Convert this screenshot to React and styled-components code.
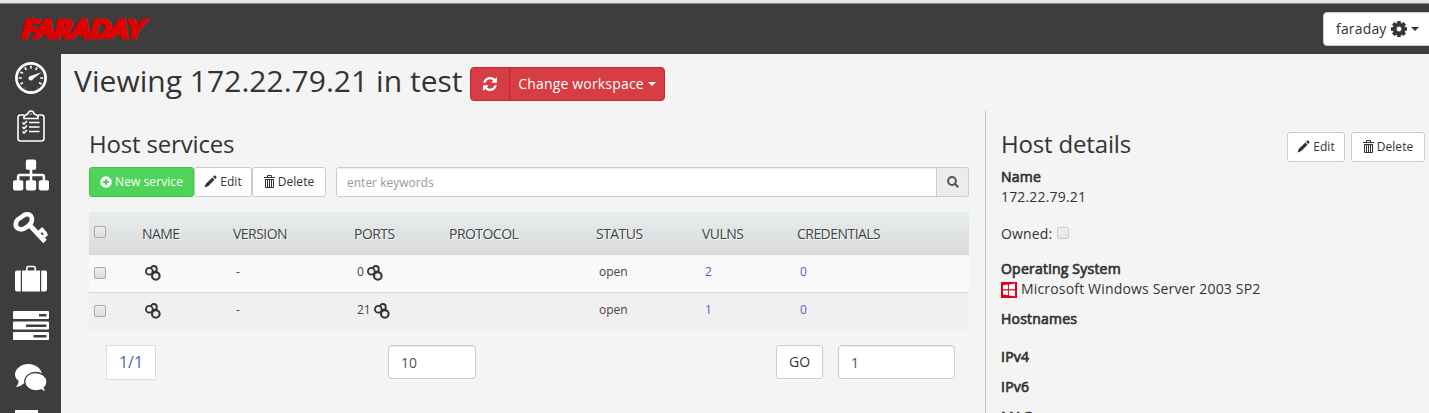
import React from "react";
import styled, { createGlobalStyle } from "styled-components";

const Global = createGlobalStyle`
  *, *::before, *::after { box-sizing: border-box; }
  html, body { margin: 0; padding: 0; }
  body {
    font-family: "Open Sans", "Liberation Sans", sans-serif;
    font-size: 14px;
    line-height: 20px;
    color: #333;
    background: #f4f4f4;
    overflow: hidden;
  }
  svg { display: block; flex: none; }
  button, input { font-family: inherit; margin: 0; }
`;

const Page = styled.div`
  height: 413px;
  overflow: hidden;
  display: flex;
  flex-direction: column;
  background: #3d3d3d;
`;
const TopStrip = styled.div`
  flex: none;
  height: 4px;
  background: #e5e5e1;
  border-bottom: 1px solid #8c8c8a;
`;
const Header = styled.header`
  flex: none;
  height: 50px;
  display: flex;
  justify-content: space-between;
  align-items: flex-start;
  padding: 8px 0 0 20px;
`;
const Logo = styled.svg`
  margin-top: 6px;
  overflow: visible;
`;
const UserButton = styled.button`
  display: flex;
  align-items: center;
  width: 112px;
  height: 34px;
  margin-right: -6px;
  padding: 0 0 1px 12px;
  border: 1px solid #ccc;
  border-radius: 4px;
  background: #fff;
  color: #333;
  font-size: 14px;
  letter-spacing: 0.17px;
  svg { margin-left: 4px; }
`;
const Caret = styled.span`
  margin-left: 4px;
  border-top: 4px solid currentColor;
  border-left: 4px solid transparent;
  border-right: 4px solid transparent;
`;
const Body = styled.div`
  flex: 1;
  min-height: 0;
  display: flex;
`;
const Sidebar = styled.nav`
  width: 61px;
  flex: none;
  display: flex;
  flex-direction: column;
  align-items: center;
  overflow: hidden;
`;
const NavItem = styled.a`
  flex: none;
  height: ${(p) => p.$h}px;
  width: 61px;
  display: flex;
  align-items: center;
  justify-content: center;
  color: #fff;
`;
const Main = styled.main`
  flex: 1;
  min-width: 0;
  background: #f4f4f4;
  display: flex;
  flex-direction: column;
  overflow: hidden;
`;
const TitleBar = styled.div`
  flex: none;
  height: 57px;
  display: flex;
  padding: 0 0 0 13px;
`;
const Title = styled.h2`
  margin: 0;
  width: 396px;
  font-size: 30px;
  font-weight: 400;
  line-height: 54px;
  letter-spacing: 0.03px;
  white-space: nowrap;
`;
const RedGroup = styled.div`
  display: flex;
  height: 34px;
  margin-top: 13px;
  border: 1px solid #c9252d;
  border-radius: 4px;
  background: #d63d45;
  overflow: hidden;
`;
const RedButton = styled.button`
  display: flex;
  align-items: center;
  justify-content: center;
  width: ${(p) => p.$w}px;
  padding: 0 0 1px;
  border: 0;
  border-left: ${(p) => (p.$divided ? "1px solid #c9252d" : "0")};
  background: transparent;
  color: #fff;
  font-size: 14px;
  letter-spacing: 0.18px;
  white-space: nowrap;
`;
const Columns = styled.div`
  flex: 1;
  min-height: 0;
  display: flex;
`;
const Services = styled.section`
  width: 924px;
  flex: none;
  padding: 20px 16px 0 28px;
`;
const Details = styled.section`
  flex: 1;
  border-left: 1px solid #c3c3c3;
  padding: 20px 4px 0 15px;
`;
const Heading = styled.h3`
  margin: 0;
  font-size: 24px;
  font-weight: 400;
  line-height: 26px;
  letter-spacing: -0.17px;
  white-space: nowrap;
`;
const Toolbar = styled.div`
  display: flex;
  margin-top: 10px;
  height: 30px;
`;
const Button = styled.button`
  display: flex;
  align-items: center;
  justify-content: center;
  gap: 3px;
  width: ${(p) => p.$w}px;
  height: ${(p) => p.$h || 30}px;
  padding: 0 0 1px;
  border: 1px solid ${(p) => (p.$green ? "#3fc548" : "#ccc")};
  border-radius: 3px;
  background: ${(p) => (p.$green ? "#4fd358" : "#fff")};
  color: ${(p) => (p.$green ? "#fff" : "#333")};
  font-size: ${(p) => p.$size || 12}px;
  letter-spacing: 0.08px;
  white-space: nowrap;
`;
const Search = styled.div`
  flex: 1;
  display: flex;
  margin-left: 10px;
  border: 1px solid #ccc;
  border-radius: 3px;
  overflow: hidden;
`;
const SearchInput = styled.input`
  flex: 1;
  min-width: 0;
  border: 0;
  padding: 1px 10px;
  background: #fff;
  box-shadow: inset 0 1px 1px rgba(0, 0, 0, 0.075);
  font-size: 12px;
  color: #555;
  &::placeholder { color: #999; opacity: 1; }
`;
const SearchButton = styled.span`
  width: 32px;
  display: flex;
  align-items: center;
  justify-content: center;
  border-left: 1px solid #ccc;
  background: #ececec;
  color: #555;
`;
const Table = styled.div`
  margin-top: 15px;
`;
const Row = styled.div`
  display: grid;
  grid-template-columns: 53px 91px 121px 95px 147px 106px 95px 1fr;
`;
const HeadRow = styled(Row)`
  height: 43px;
  background: linear-gradient(#e6eded, #dadada);
  line-height: 43px;
  letter-spacing: -0.54px;
  text-shadow: 1px 1px 0 rgba(255, 255, 255, 0.8);
  color: #444;
`;
const DataRow = styled(Row)`
  height: ${(p) => (p.$alt ? 38 : 37)}px;
  border-top: ${(p) => (p.$alt ? "1px solid #d9d9d9" : "0")};
  background: ${(p) => (p.$alt ? "#f0f0f0" : "#f9f9f9")};
  font-size: 12px;
  line-height: 34px;
`;
const Cell = styled.div`
  display: flex;
  padding-left: 3px;
  color: ${(p) => (p.$link ? "#5161bd" : "#444")};
  svg { margin: 10px 0 0 ${(p) => (p.$spaced ? 3 : 0)}px; }
`;
const CheckCell = styled.div`
  display: flex;
  padding: ${(p) => p.$top}px 0 0 5px;
`;
const Checkbox = styled.span`
  flex: none;
  width: 12px;
  height: 12px;
  border: 1px solid #a9a9a9;
  border-radius: 2px;
  background: linear-gradient(#eee, #dcdcdc);
  opacity: ${(p) => (p.$disabled ? 0.55 : 1)};
`;
const Pager = styled.div`
  display: flex;
  margin-top: 15px;
  padding-left: 17px;
`;
const PageCount = styled.span`
  width: 50px;
  height: 35px;
  margin-right: 232px;
  border: 1px solid #ddd;
  background: #fff;
  color: #5161bd;
  font-size: 16px;
  line-height: 33px;
  text-align: center;
`;
const PageInput = styled.input`
  width: ${(p) => p.$w}px;
  height: 34px;
  margin-right: ${(p) => p.$gap || 0}px;
  padding: 1px 12px;
  border: 1px solid #ccc;
  border-radius: 4px;
  background: #fff;
  box-shadow: inset 0 1px 1px rgba(0, 0, 0, 0.075);
  font-size: 14px;
  color: #555;
`;
const GoSlot = styled.div`
  margin-right: 15px;
`;
const DetailsHead = styled.div`
  display: flex;
  justify-content: space-between;
  height: 36px;
`;
const Actions = styled.div`
  display: flex;
  gap: 6px;
  margin-top: 1px;
`;
const Label = styled.div`
  margin-top: ${(p) => p.$top || 0}px;
  letter-spacing: 0.22px;
  -webkit-text-stroke: 0.7px #333;
`;
const Value = styled.div`
  display: flex;
  margin-top: ${(p) => p.$top || 0}px;
  letter-spacing: 0.17px;
  white-space: nowrap;
  svg { margin: 3px 4px 0 0; }
  ${Checkbox} { margin: 3px 0 0 5px; }
`;

const DashboardIcon = () => (
  <svg width="32" height="32" viewBox="0 0 32 32" fill="none" stroke="#fff">
    <circle cx="16" cy="16" r="14.6" strokeWidth="2.7" />
    <circle cx="16" cy="16" r="10.7" strokeWidth="3" strokeDasharray="1.6 4.003" strokeDashoffset=".8" pathLength="67.236" />
    <path d="M8 23.5 Q16 19 24 23.5 L21 28 H11Z" fill="#3d3d3d" stroke="none" />
    <path d="M19 14 27 9.8" stroke="#3d3d3d" strokeWidth="4" />
    <path d="M14.8 14.2 26.5 10.3 17 17.8Z" fill="#fff" stroke="none" />
    <circle cx="15.8" cy="16.2" r="2.2" fill="#fff" stroke="none" />
  </svg>
);
const ClipboardIcon = () => (
  <svg width="28" height="32" viewBox="0 0 28 32" fill="none" stroke="#fff" strokeWidth="1.6">
    <path d="M7 5H3.500Q1 5 1 7.500V28.500Q1 31 3.500 31H24.500Q27 31 27 28.500V7.500Q27 5 24.500 5H21" />
    <path d="M7 8.500V6L11 3.800Q11.500 1 14 1T17 3.800L21 6V8.500Z" />
    <circle cx="14" cy="4" r=".7" fill="#fff" stroke="none" />
    <path d="M12 12.500H22.500M12 17H22.500M12 21.500H22.500" />
    <path d="M5.500 12.500 7 14 10 11M5.500 17 7 18.500 10 15.500M5.500 21.500 7 23 10 20" />
  </svg>
);
const SitemapIcon = () => (
  <svg width="36" height="36" viewBox="0 0 1792 1792" fill="#fff">
    <path d="M1792 1248v320q0 40-28 68t-68 28h-320q-40 0-68-28t-28-68v-320q0-40 28-68t68-28h96v-192h-512v192h96q40 0 68 28t28 68v320q0 40-28 68t-68 28h-320q-40 0-68-28t-28-68v-320q0-40 28-68t68-28h96v-192h-512v192h96q40 0 68 28t28 68v320q0 40-28 68t-68 28h-320q-40 0-68-28t-28-68v-320q0-40 28-68t68-28h96v-192q0-52 38-90t90-38h512v-192h-96q-40 0-68-28t-28-68v-320q0-40 28-68t68-28h320q40 0 68 28t28 68v320q0 40-28 68t-68 28h-96v192h512q52 0 90 38t38 90v192h96q40 0 68 28t28 68z" />
  </svg>
);
const KeyIcon = () => (
  <svg width="36" height="34" viewBox="0 0 36 34" fill="none" stroke="#fff">
    <path d="M3 12Q3.500 8.500 7 7L11.500 3.800Q17.500 2 18.800 7Q19.300 10.500 17.500 12.500Q16 15 13 16.500Q9 19.500 5 17.500Q2 15.500 3 12Z" strokeWidth="4.600" />
    <path d="M17.500 15 32 30.500" strokeWidth="4.800" />
    <path d="M26 21.500 30.300 17.200M30.500 26 34 22.500M29 18.500 33 23" strokeWidth="3.400" />
  </svg>
);
const SuitcaseIcon = () => (
  <svg width="32" height="28" viewBox="0 0 32 28" fill="#fff">
    <path d="M11.800 6V3Q11.800 1.500 13.300 1.500H18.700Q20.200 1.500 20.200 3V6" fill="none" stroke="#fff" strokeWidth="1.600" />
    <path d="M2 5.500H5.800V26.500H2Q0 26.500 0 24.500V7.500Q0 5.500 2 5.500ZM7 5.500H25V26.500H7ZM26.200 5.500H30Q32 5.500 32 7.500V24.500Q32 26.500 30 26.500H26.200Z" />
  </svg>
);
const TasksIcon = () => (
  <svg width="36" height="29" viewBox="0 0 36 29" fill="#fff">
    <rect y="0" width="36" height="8" rx="1" />
    <rect y="10.500" width="36" height="8" rx="1" />
    <rect y="21" width="36" height="8" rx="1" />
    <g fill="#3d3d3d">
      <rect x="26" y="3" width="7.500" height="2.500" />
      <rect x="13" y="13.500" width="20.500" height="2.500" />
      <rect x="20.500" y="24" width="13" height="2.500" />
    </g>
  </svg>
);
const CommentsIcon = () => (
  <svg width="32" height="28" viewBox="0 0 32 28" fill="#fff">
    <path d="M13.500 0C21 0 27 5 27 11S21 20.500 13.500 20.500Q11 20.500 8.500 19.500 6 22.500 1 23 3.500 20 3.700 17 0 14 0 10.500C0 5 6 0 13.500 0Z" />
    <path d="M20.500 8.500C27 8.500 32 12.500 32 18Q32 21.500 29.300 23.800 29.500 26 32 27.800 28.500 27.800 26 25.800 23.500 26.800 20.500 26.800C14.500 26.800 9.700 22.500 9.700 17.500S14.500 8.500 20.500 8.500Z" stroke="#3d3d3d" strokeWidth="1.300" />
  </svg>
);
const PageIcon = () => (
  <svg width="32" height="32" viewBox="0 0 32 32" fill="#fff">
    <path d="M0 0H23V9H32V32H0Z" />
  </svg>
);
const CogIcon = () => (
  <svg width="16" height="16" viewBox="128 128 1536 1536" fill="currentColor" stroke="currentColor" strokeWidth="50">
    <path d="M1152 896q0-106-75-181t-181-75-181 75-75 181 75 181 181 75 181-75 75-181zm512-109v222q0 12-8 23t-20 13l-185 28q-19 54-39 91 35 50 107 138 10 12 10 25t-9 23q-27 37-99 108t-94 71q-12 0-26-9l-138-108q-44 23-91 38-16 136-29 186-7 28-36 28h-222q-14 0-24.500-8.500t-11.500-21.500l-28-184q-49-16-90-37l-141 107q-10 9-25 9-14 0-25-11-126-114-165-168-7-10-7-23 0-12 8-23 15-21 51-66.500t54-70.500q-27-50-41-99l-183-27q-13-2-21-12.500t-8-23.500v-222q0-12 8-23t19-13l186-28q14-46 39-92-40-57-107-138-10-12-10-24 0-10 9-23 26-36 98.500-107.500t94.500-71.500q13 0 26 10l138 107q44-23 91-38 16-136 29-186 7-28 36-28h222q14 0 24.500 8.500t11.500 21.500l28 184q49 16 90 37l142-107q9-9 24-9 13 0 25 10 129 119 165 170 7 8 7 22 0 12-8 23-15 21-51 66.500t-54 70.500q26 50 41 98l183 28q13 2 21 12.500t8 23.500z" />
  </svg>
);
const RefreshIcon = () => (
  <svg width="14" height="14" viewBox="0 128 1536 1536" fill="#fff">
    <path d="M1511 1056q0 5-1 7-64 268-268 434.500t-478 166.500q-146 0-282.500-55t-243.500-157l-129 129q-19 19-45 19t-45-19-19-45v-448q0-26 19-45t45-19h448q26 0 45 19t19 45-19 45l-137 137q71 66 161 102t187 36q134 0 250-65t186-179q11-17 53-117 8-23 30-23h192q13 0 22.500 9.500t9.500 22.500zm25-800v448q0 26-19 45t-45 19h-448q-26 0-45-19t-19-45 19-45l138-138q-148-137-349-137-134 0-250 65t-186 179q-11 17-53 117-8 23-30 23h-199q-13 0-22.500-9.500t-9.500-22.500v-7q65-268 270-434.500t480-166.500q146 0 284 55.500t245 156.500l130-129q19-19 45-19t45 19 19 45z" />
  </svg>
);
const PlusIcon = () => (
  <svg width="12" height="12" viewBox="0 0 12 12">
    <circle cx="6" cy="6" r="5.800" fill="#fff" />
    <path d="M6 3V9M3 6H9" stroke="#4fd358" strokeWidth="2" />
  </svg>
);
const PencilIcon = () => (
  <svg width="13" height="13" viewBox="0 0 13 13" fill="currentColor">
    <path d="M.5 12.500 1.700 8.900 8.300 2.500 10.600 4.800 4 11.300ZM9 1.800 10.200.6Q10.800.2 11.400.7L12.400 1.700Q12.800 2.300 12.300 2.900L11.200 4.100Z" />
  </svg>
);
const TrashIcon = () => (
  <svg width="11" height="13" viewBox="0 0 11 13" fill="none" stroke="currentColor">
    <path d="M0 2.500H11M3.500 2V.5H7.500V2M1.500 4V12.500H9.500V4M1 4.500H10M3.500 4V12M5.500 4V12M7.500 4V12" />
  </svg>
);
const SearchIcon = () => (
  <svg width="12" height="12" viewBox="0 0 12 12" fill="none" stroke="currentColor" strokeWidth="2">
    <circle cx="5" cy="5" r="3.900" />
    <path d="M7.800 7.800 11.300 11.300" />
  </svg>
);
const RingsIcon = () => (
  <svg width="16" height="16" viewBox="0 0 16 16" stroke="#333" strokeWidth="1.800" fill="#eee">
    <circle cx="8.800" cy="4" r="3" />
    <circle cx="4.300" cy="6.300" r="3.400" />
    <circle cx="10.800" cy="10.900" r="3.800" strokeWidth="2.100" />
  </svg>
);
const WindowsIcon = () => (
  <svg width="16" height="16" viewBox="0 0 16 16">
    <rect width="16" height="16" fill="#e0001b" />
    <path d="M2 3.300 6.900 2.600V7.300H2ZM7.900 2.400 14 1.500V7.300H7.900ZM2 8.400H6.900V13.200L2 12.500ZM7.900 8.400H14V14.300L7.900 13.400Z" fill="#fff" />
  </svg>
);

const NAV = [
  [DashboardIcon, 48],
  [ClipboardIcon, 48],
  [SitemapIcon, 50],
  [KeyIcon, 56],
  [SuitcaseIcon, 46],
  [TasksIcon, 47],
  [CommentsIcon, 58],
];
const HEADERS = ["NAME", "VERSION", "PORTS", "PROTOCOL", "STATUS", "VULNS", "CREDENTIALS"];
const ROWS = [
  { version: "-", port: "0", status: "open", vulns: "2", creds: "0" },
  { version: "-", port: "21", status: "open", vulns: "1", creds: "0" },
];

export default function App() {
  return (
    <Page>
      <Global />
      <TopStrip />
      <Header>
        <Logo width="128" height="22" viewBox="0 0 128 22">
          <text x="3.500" y="20" transform="skewX(-7)" textLength="122" lengthAdjust="spacingAndGlyphs" fontFamily="Lato, sans-serif" fontWeight="900" fontStyle="italic" fontSize="25" fill="#e00000" stroke="#e00000" strokeWidth="2.600">FARADAY</text>
        </Logo>
        <UserButton>faraday<CogIcon /><Caret /></UserButton>
      </Header>
      <Body>
        <Sidebar>
          {NAV.map(([Icon, h], i) => (
            <NavItem key={i} $h={h}><Icon /></NavItem>
          ))}
          <NavItem $h={38}><PageIcon /></NavItem>
        </Sidebar>
        <Main>
          <TitleBar>
            <Title>Viewing 172.22.79.21 in test</Title>
            <RedGroup>
              <RedButton $w={38}><RefreshIcon /></RedButton>
              <RedButton $w={155} $divided>Change workspace<Caret /></RedButton>
            </RedGroup>
          </TitleBar>
          <Columns>
            <Services>
              <Heading>Host services</Heading>
              <Toolbar>
                <Button $w={105} $green><PlusIcon />New service</Button>
                <Button $w={58}><PencilIcon />Edit</Button>
                <Button $w={74}><TrashIcon />Delete</Button>
                <Search>
                  <SearchInput placeholder="enter keywords" />
                  <SearchButton><SearchIcon /></SearchButton>
                </Search>
              </Toolbar>
              <Table>
                <HeadRow>
                  <CheckCell $top={14}><Checkbox /></CheckCell>
                  {HEADERS.map((h) => <div key={h}>{h}</div>)}
                </HeadRow>
                {ROWS.map((r, i) => (
                  <DataRow key={i} $alt={i === 1}>
                    <CheckCell $top={12}><Checkbox /></CheckCell>
                    <Cell><RingsIcon /></Cell>
                    <Cell>{r.version}</Cell>
                    <Cell $spaced>{r.port}<RingsIcon /></Cell>
                    <Cell />
                    <Cell>{r.status}</Cell>
                    <Cell $link>{r.vulns}</Cell>
                    <Cell $link>{r.creds}</Cell>
                  </DataRow>
                ))}
              </Table>
              <Pager>
                <PageCount>1/1</PageCount>
                <PageInput $w={88} $gap={300} defaultValue="10" />
                <GoSlot><Button $w={47} $h={34} $size={14}>GO</Button></GoSlot>
                <PageInput $w={117} defaultValue="1" />
              </Pager>
            </Services>
            <Details>
              <DetailsHead>
                <Heading>Host details</Heading>
                <Actions>
                  <Button $w={58}><PencilIcon />Edit</Button>
                  <Button $w={74}><TrashIcon />Delete</Button>
                </Actions>
              </DetailsHead>
              <Label>Name</Label>
              <Value>172.22.79.21</Value>
              <Value $top={17}>Owned:<Checkbox $disabled /></Value>
              <Label $top={15}>Operating System</Label>
              <Value><WindowsIcon />Microsoft Windows Server 2003 SP2</Value>
              <Label $top={10}>Hostnames</Label>
              <Label $top={18}>IPv4</Label>
              <Label $top={10}>IPv6</Label>
              <Label $top={10}>MAC</Label>
            </Details>
          </Columns>
        </Main>
      </Body>
    </Page>
  );
}
